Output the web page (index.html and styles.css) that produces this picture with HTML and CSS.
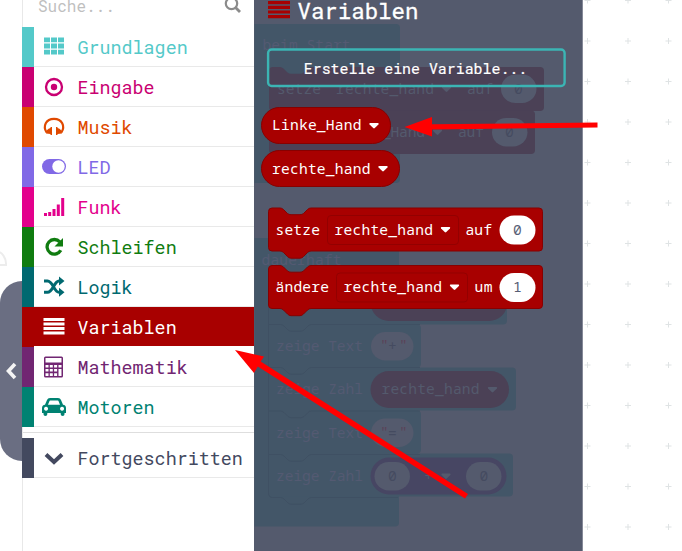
FILE: index.html
```
<!DOCTYPE html>
<html lang="de">
<head>
<meta charset="utf-8">
<title>Variablen</title>
<link rel="stylesheet" href="styles.css">
</head>
<body>
<svg class="layer" width="682" height="551">
  <defs>
    <path id="cross" d="M-3 0H3M0-3V3"/>
  </defs>
  <g class="crosses" id="crosses"></g>
  <path d="M-4 251a11 13 0 0 1 10 14h-10" fill="none" stroke="#ececec" stroke-width="2"/>
</svg>
<main class="editor">
  <div class="collapse"><svg width="12" height="18" viewBox="0 0 12 18"><path d="M10 2 3.500 9l6.500 7" fill="none" stroke="#f4f4f4" stroke-width="3.600"/></svg></div>
  <nav class="toolbox">
    <div class="search"><span>Suche...</span>
      <svg width="18" height="18" viewBox="0 0 18 18" fill="none" stroke="#8b8b8b" stroke-width="2.200"><circle cx="7.500" cy="7.500" r="5.700"/><path d="m11.500 11.500 4.500 4.500" stroke-width="2.800"/></svg></div>
    <div class="row basic"><svg viewBox="0 0 24 24"><path d="M2 2.500h6v4.800H2zM9 2.500h6v4.800H9zM16 2.500h6v4.800h-6zM2 8.600h6v4.800H2zM9 8.600h6v4.800H9zM16 8.600h6v4.800h-6zM2 14.700h6v4.800H2zM9 14.700h6v4.800H9zM16 14.700h6v4.800h-6z"/></svg><span>Grundlagen</span></div>
    <div class="row input"><svg viewBox="0 0 24 24"><circle cx="12" cy="12" r="8" fill="none" stroke="currentColor" stroke-width="2.300"/><circle cx="12" cy="12" r="3.200"/></svg><span>Eingabe</span></div>
    <div class="row music"><svg viewBox="0 0 24 24"><path d="M4.600 17.500C.5 11 4 3.800 12 3.800s11.500 7.200 7.400 13.700" fill="none" stroke="currentColor" stroke-width="2.200"/><path d="M10 12v8H8.500v-1L4 18.500q0-4.500 4.500-5.500v-1zM14 12v8h1.500v-1l4.500-.5q0-4.500-4.500-5.500v-1z"/></svg><span>Musik</span></div>
    <div class="row led"><svg viewBox="0 0 24 24"><rect y="4" width="24" height="15" rx="7.500"/><circle cx="16.500" cy="11.500" r="6.200" fill="#fff"/></svg><span>LED</span></div>
    <div class="row radio"><svg viewBox="0 0 24 24"><path d="M2 18h3v3H2zM6.200 17h3v4h-3zM10.500 14h3v7h-3zM14.800 9.500h3V21h-3zM19.200 3h3v18h-3z"/></svg><span>Funk</span></div>
    <div class="row loops"><svg viewBox="0 0 24 24"><path d="M18.800 15.300a7.300 7.300 0 1 1-1-8.400" fill="none" stroke="currentColor" stroke-width="3.300"/><path d="M21 3v8.500h-8.500z"/></svg><span>Schleifen</span></div>
    <div class="row logic"><svg viewBox="0 0 24 24"><path d="M2 6h3.500C11 6 12 17.300 17 17.300h1M2 17.300h3.500C11 17.300 12 6 17 6h1" fill="none" stroke="currentColor" stroke-width="3"/><path d="m17 1.500 5.500 4.500-5.500 4.500zM17 12.800l5.500 4.500-5.500 4.500z"/></svg><span>Logik</span></div>
    <div class="row vars"><svg viewBox="0 0 24 24"><path d="M1.500 3h21v2.900h-21zM1.500 7.500h21v2.900h-21zM1.500 12h21v2.900h-21zM1.500 16.500h21v2.900h-21z"/></svg><span>Variablen</span></div>
    <div class="row math"><svg viewBox="0 0 24 24"><path fill-rule="evenodd" d="M3.500 1.500h16q1.500 0 1.500 1.500v18q0 1.500-1.500 1.500h-16Q2 22.500 2 21V3q0-1.500 1.500-1.500zM3.500 3v4.500h16V3zM3.500 10v2.600h3V10zM7.800 10v2.600h3V10zM12.100 10v2.600h3V10zM16.500 10v2.600h3V10zM3.500 14v2.600h3V14zM7.800 14v2.600h3V14zM12.100 14v2.600h3V14zM3.500 18.200v2.800h3v-2.800zM7.800 18.200v2.800h3v-2.800zM12.100 18.200v2.800h3v-2.800zM16.500 14v7h3v-7z"/></svg><span>Mathematik</span></div>
    <div class="row motors"><svg viewBox="0 0 24 24"><path fill-rule="evenodd" d="M0 13q0-3 3-3.300L5 5q.7-2 3-2h8q2.300 0 3 2l2 4.700q3 .3 3 3.300v5h-1.500v1.200q0 1.800-1.800 1.800-2 0-2-1.800V18H5.300v1.200q0 1.800-1.900 1.800-1.900 0-1.900-1.800V18H0zM6 9.700h12l-1.400-3.500q-.2-.6-.8-.6H8.200q-.6 0-.8.6zM4 11.700a2 2 0 1 0 .1 0M20 11.700a2 2 0 1 0 .1 0"/></svg><span>Motoren</span></div>
    <div class="divider"></div>
    <div class="row more"><svg viewBox="0 0 24 24"><path d="m4 8.500 8 7.500 8-7.500" fill="none" stroke="currentColor" stroke-width="4"/></svg><span>Fortgeschritten</span></div>
  </nav>
  <section class="flyout">
    <h1><svg width="22" height="18" viewBox="0 0 22 18"><path d="M0 0h22v3.200H0zM0 4.700h22v3.200H0zM0 9.400h22v3.200H0zM0 14.100h22v3.200H0z" fill="#a80000"/></svg><span>Variablen</span></h1>
    <button>Erstelle eine Variable...</button>
  </section>
</main>

<svg class="layer ghosts" width="682" height="551">
  <defs>
    <path id="caret" d="M-4-2.500h8q1.200.4.400 1.500L.8 2.600q-.8.700-1.600 0L-4.400-1q-.8-1.100.4-1.500z"/>
    <path id="notch" d="M280 0q1.800 0 3.500 1.500l4 4q1.500 1.200 3.500 1.200h9q2 0 3.500-1.200l4-4q1.500-1.500 3.500-1.500z"/>
    <path id="stmt" d="M268.500 4q0-3.500 3.500-3.500h8q1.800 0 3.500 1.500l4 4q1.500 1.200 3.500 1.200h9q2 0 3.500-1.200l4-4q1.500-1.500 3.500-1.500h228q3.500 0 3.500 3.500v36q0 3.500-3.500 3.500H311q-2 0-3.500 1.500l-4 4q-1.500 1.700-3.500 1.700h-9q-2 0-3.500-1.700l-4-4q-1.500-1.500-3.500-1.500h-8q-3.500 0-3.500-3.500z"/>
    <path id="seam" d="M269 0h11.500q1.800 0 3.500 1.500l4 4q1.500 1.200 3.500 1.200h9q2 0 3.500-1.200l4-4q1.500-1.500 3.500-1.500H420"/>
  </defs>
  <g class="event">
    <path d="M254.500 24H396q4 0 4 4v151q0 4-4 4H254.500z"/>
    <path d="M254.500 238H395q4 0 4 4v280.500q0 4-4 4H254.500z"/>
    <path d="M269 281.500h234q4 0 4 4v35q0 4-4 4h-86q4 0 4 4v35q0 4-4 4h95q4 0 4 4v35q0 4-4 4h-95q4 0 4 4v35q0 4-4 4h92q4 0 4 4v35q0 4-4 4H269z"/>
  </g>
  <g class="seams">
    <path d="M268.500 285v208q0 4.500 4 4.500h8q1.800 0 3.500 1.500l4 4q1.500 1.200 3.500 1.200h9q2 0 3.500-1.200l4-4q1.500-1.500 3.500-1.500H398"/>
    <use href="#seam" y="324.500"/><use href="#seam" y="367.500"/><use href="#seam" y="411"/><use href="#seam" y="454.500"/>
  </g>
  <g fill="#4b4156">
    <rect x="269" y="67" width="275" height="44" rx="4"/>
    <rect x="269" y="110.500" width="266" height="43.500" rx="4"/>
    <rect x="370.500" y="284" width="137" height="37" rx="18.500"/>
    <rect x="370.500" y="371" width="138.500" height="37" rx="18.500"/>
  </g>
  <use href="#notch" y="67" fill="#435668"/>
  <rect x="370.500" y="457.500" width="136" height="37" rx="18.500" fill="#474663"/>
  <g fill="#545a6d">
    <rect x="501" y="74.500" width="35.500" height="28.500" rx="14.200"/>
    <rect x="492" y="118" width="35.500" height="28.500" rx="14.200"/>
    <rect x="371" y="332" width="42.500" height="28.500" rx="14.200"/>
    <rect x="371" y="418.500" width="42.500" height="28.500" rx="14.200"/>
    <rect x="374.500" y="462" width="35.500" height="28.500" rx="14.200"/>
    <rect x="466" y="462" width="35.500" height="28.500" rx="14.200"/>
    <use href="#caret" x="446.500" y="89"/><use href="#caret" x="437.500" y="132"/>
    <use href="#caret" x="492.500" y="389.500"/><use href="#caret" x="446" y="476"/>
    <text x="277" y="94" textLength="44">setze</text><text x="336" y="94" textLength="98">rechte_hand</text><text x="467" y="94" textLength="26">auf</text>
    <text x="382" y="137" textLength="43">_Hand</text><text x="458" y="137" textLength="26">auf</text>
    <text x="381.500" y="394" textLength="98">rechte_hand</text><text x="424" y="481">+</text>
  </g>
  <g fill="#545a72">
    <text x="262.500" y="50" textLength="88">beim Start</text><text x="261.500" y="265" textLength="80">dauerhaft</text>
    <text x="276" y="351" textLength="87">zeige Text</text><text x="276" y="394" textLength="87">zeige Zahl</text>
    <text x="276" y="438" textLength="87">zeige Text</text><text x="276" y="481" textLength="87">zeige Zahl</text>
  </g>
  <g fill="#454b60">
    <text x="514" y="94">0</text><text x="505" y="137">0</text><text x="388" y="481">0</text><text x="479.500" y="481">0</text>
    <text x="388" y="351">+</text><text x="388" y="438">=</text>
  </g>
  <g fill="#5b4358"><text x="380" y="350">"</text><text x="399" y="350">"</text><text x="380" y="437">"</text><text x="399" y="437">"</text></g>
</svg>

<svg class="layer blocks" width="682" height="551">
  <g fill="none" stroke="#3bb5b4" stroke-width="2.400"><rect x="268.100" y="49.500" width="296.500" height="36.500" rx="3.500"/></g>
  <g fill="#a80000" stroke="#870000">
    <rect x="261.500" y="107.500" width="129" height="36" rx="18"/>
    <rect x="261.500" y="150.500" width="138" height="36" rx="18"/>
    <use href="#stmt" y="207.500"/><use href="#stmt" y="265"/>
    <rect x="327.500" y="215.500" width="131" height="29" rx="3.500" stroke="#930000"/>
    <rect x="336.500" y="273" width="131" height="29" rx="3.500" stroke="#930000"/>
  </g>
  <g fill="#fff">
    <rect x="499.500" y="215.500" width="36" height="29" rx="14.500"/>
    <rect x="499.500" y="273" width="36" height="29" rx="14.500"/>
    <use href="#caret" x="374" y="125.500"/><use href="#caret" x="383" y="168.500"/>
    <use href="#caret" x="445.500" y="229.500"/><use href="#caret" x="454.500" y="287"/>
    <text x="272" y="130" textLength="89.500">Linke_Hand</text>
    <text x="272" y="173.500" textLength="98.500">rechte_hand</text>
    <text x="275.500" y="235" textLength="44.500">setze</text><text x="334.500" y="235" textLength="98.500">rechte_hand</text><text x="465.500" y="235" textLength="26.500">auf</text>
    <text x="275.500" y="292" textLength="53.500">ändere</text><text x="343.500" y="292" textLength="98.500">rechte_hand</text><text x="474.500" y="292" textLength="18">um</text>
  </g>
  <g fill="#575e75"><text x="513" y="235">0</text><text x="513" y="292">1</text></g>
  <g fill="#f00" stroke="none">
    <path d="M404.500 127 432 117v7.300l165.500-1.800v5L432 129.500v7z"/>
    <path d="M235 350 264 356.500 260.700 361.500 468 494 465 498.500 257.800 366.500 254 373z"/>
  </g>
</svg>
<script>
const g = document.getElementById('crosses');
let s = '';
for (let x = 587.5; x < 682; x += 40.5)
  for (let y = 0.5; y < 551; y += 40.5) s += `<use href="#cross" x="${x}" y="${y}"/>`;
g.innerHTML = s;
</script>
</body>
</html>
```
FILE: styles.css
```
* { box-sizing: border-box; }
body { margin: 0; width: 682px; height: 551px; overflow: hidden; position: relative; background: #fff; font-family: "Roboto Mono", "DejaVu Sans Mono", monospace; }
.layer { position: absolute; left: 0; top: 0; display: block; }
.crosses { stroke: #dfe3e4; }
.editor { display: flex; height: 551px; position: relative; }
.collapse { width: 22px; height: 180px; margin-top: 281px; background: #6a6e82; border-radius: 22px 0 0 22px; display: flex; align-items: center; padding-left: 5px; }
.toolbox { width: 232px; background: #fff; border-left: 1px solid #e8e8e8; display: flex; flex-direction: column; font-size: 18.37px; }
.search { height: 27px; display: flex; justify-content: space-between; padding: 0 12px 0 15px; color: #bfbfbf; font-size: 16px; line-height: 11px; }
.search svg { margin-top: -4px; }
.row { height: 40px; flex: none; margin-left: -1px; border-left: 12px solid currentColor; display: flex; align-items: center; gap: 11.500px; padding-left: 8px; box-shadow: inset 0 -1px #e9e9e9; line-height: 40px; white-space: nowrap; }
.row svg { width: 24px; height: 24px; fill: currentColor; margin-top: -1px; }
.basic { color: #54c9c9; }
.input { color: #c90072; }
.music { color: #e04900; }
.led { color: #8169e6; }
.radio { color: #e3008c; }
.loops { color: #107c10; }
.logic { color: #006970; }
.vars { color: #fff; border-color: #a80000; background: linear-gradient(#a80000, #a80000) 0 0 / 100% 39px no-repeat; box-shadow: none; }
.math { color: #712672; }
.motors { color: #008272; }
.more { color: #43495f; }
.divider { height: 11px; background: linear-gradient(#dedede, #dedede) 0 5px / 100% 1px no-repeat; }
.flyout { width: 329px; background: #545a6d; border-right: 1px solid #858998; color: #fff; }
.flyout h1 { margin: 0; font-size: 22.400px; font-weight: 400; -webkit-text-stroke: .3px #fff; line-height: 22px; display: flex; gap: 7.500px; padding-left: 14px; height: 49px; }
.flyout h1 svg { margin-top: 1px; }
/* the button label stays above the dimmed workspace blocks */
.flyout button { display: block; position: relative; z-index: 5; margin-left: 14px; width: 295px; height: 38px; padding: 0; border: 0; background: none; color: #fff; font: 400 14.900px "Roboto Mono", "DejaVu Sans Mono", monospace; -webkit-text-stroke: .2px #fff; }
.ghosts text, .blocks text { font-family: "Noto Sans Mono", "DejaVu Sans Mono", monospace; font-size: 14.600px; }
.event { fill: #435668; }
.seams { fill: none; stroke: #3f5063; }
```
